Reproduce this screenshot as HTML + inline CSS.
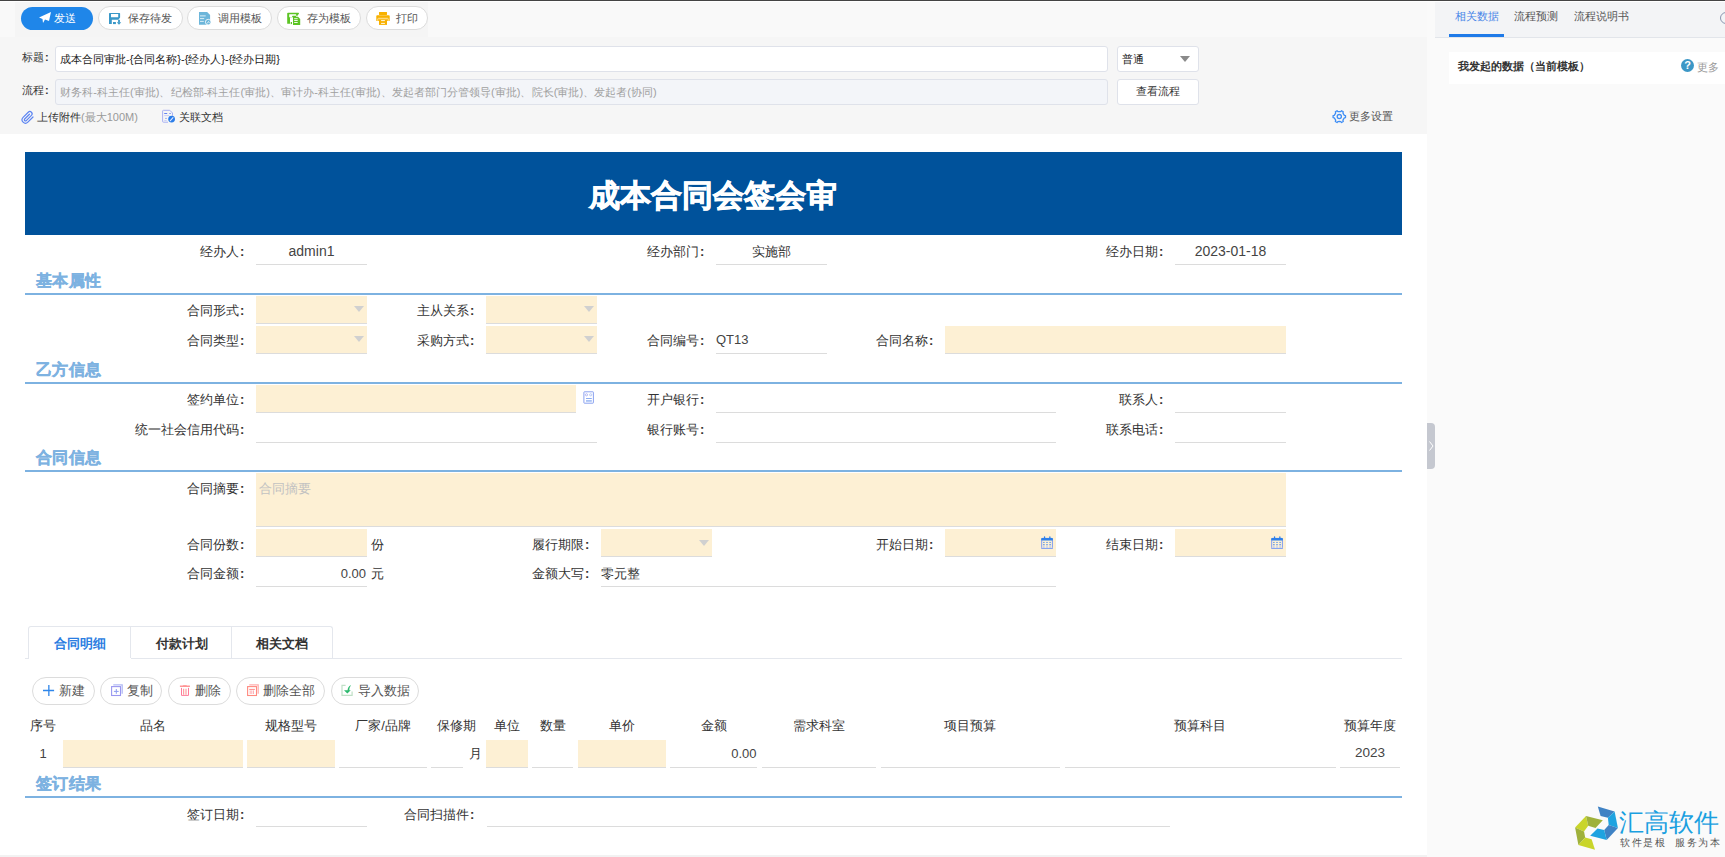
<!DOCTYPE html>
<html><head><meta charset="utf-8">
<style>
*{box-sizing:border-box;margin:0;padding:0}
html,body{width:1725px;height:857px;overflow:hidden;background:#fff;font-family:"Liberation Sans",sans-serif;color:#333}
.a{position:absolute}
.t{position:absolute;white-space:nowrap;font-size:12px;line-height:12px;color:#333}
.s11{font-size:11px;line-height:11px}
.s13{font-size:13px;line-height:13px}
.btn{position:absolute;height:24px;border:1px solid #dcdcdc;border-radius:12px;background:#fff}
.fld{position:absolute;height:28px;background:#fdf0d4;border-bottom:1px solid #dcdcdc}
.und{position:absolute;height:28px;border-bottom:1px solid #dcdcdc}
.sec{position:absolute;left:36px;font-size:16px;line-height:16px;font-weight:bold;letter-spacing:0.4px;color:#7db2e1;-webkit-text-stroke:0.35px #7db2e1;white-space:nowrap}
.secl{position:absolute;left:25px;width:1377px;height:2px;background:#7db2e1}
.lbl{position:absolute;white-space:nowrap;font-size:13px;line-height:13px;color:#333;text-align:right}
.c{display:inline-block;width:6px;text-indent:1px;font-weight:bold;text-align:left}
.tri{position:absolute;width:0;height:0;border-left:5px solid transparent;border-right:5px solid transparent;border-top:6px solid #d0d0d0}
.tbtn{position:absolute;height:28px;border:1px solid #dcdcdc;border-radius:14px;background:#fff}
.th{position:absolute;top:719px;font-size:13px;line-height:13px;white-space:nowrap;color:#333;text-align:center}
</style></head><body>
<!-- top dark line -->
<div class="a" style="left:0;top:0;width:1725px;height:1px;background:#444"></div>
<!-- left main bg -->
<div class="a" style="left:0;top:2px;width:1427px;height:132px;background:#f6f6f6"></div>
<div class="a" style="left:0;top:2px;width:1427px;height:35px;background:#f9f9f9"></div>
<div class="a" style="left:15px;top:2px;width:413px;height:35px;background:#f5f5f5"></div>
<!-- right panel -->
<div class="a" style="left:1427px;top:2px;width:298px;height:855px;background:#fafafa"></div>
<div class="a" style="left:1435px;top:2px;width:290px;height:36px;background:#f3f4f6;border-bottom:1px solid #e2e5ea"></div>
<!-- bottom band -->
<div class="a" style="left:0;top:855px;width:1427px;height:2px;background:#f2f2f2"></div>

<!-- toolbar buttons -->
<div class="a" style="left:21px;top:7px;width:72px;height:23px;border-radius:12px;background:#1f86e9"></div>
<svg class="a" style="left:39px;top:12px" width="12" height="11" viewBox="0 0 12 11"><path d="M0 5.5 L12 0 L10 9 L6 7.5 L4 11 L3.5 7 Z" fill="#fff"/></svg>
<div class="t" style="left:54px;top:12.5px;color:#fff;font-size:11px;line-height:11px">发送</div>

<div class="btn" style="left:98px;top:6px;width:85px"></div>
<svg class="a" style="left:104px;top:8px" width="24" height="20" viewBox="0 0 24 20"><path fill-rule="evenodd" fill="#3a98c8" d="M5 5.6Q5 4.9 5.7 4.9H15.4Q16.1 4.9 16.1 5.6V9.6L14.4 11.7H7.8V16.1H5ZM7 6.1V9.3H14.2V6.1Z"/><rect x="9" y="14" width="2.9" height="2.1" fill="#3a98c8"/><rect x="14.1" y="11.8" width="1.8" height="2.8" fill="#3a98c8"/><path d="M12.8 14.2H17.2L15 16.8Z" fill="#3a98c8"/></svg>
<div class="t" style="left:128px;top:12.5px;color:#555;font-size:11px;line-height:11px">保存待发</div>

<div class="btn" style="left:187px;top:6px;width:85px"></div>
<svg class="a" style="left:194px;top:8px" width="24" height="20" viewBox="0 0 24 20"><path fill="#6db6da" d="M5 3.9H13.1L16.1 7V11.2L13.5 16.8H5Z"/><path d="M6 7.9H11.7M6 10.6H10.2M6 13.4H9.8" stroke="#fff" stroke-width="0.9" opacity="0.85"/><circle cx="14.2" cy="14.1" r="2.8" fill="#6db6da" stroke="#fff" stroke-width="0.8"/><path d="M13 15.5L14.5 13.5L15.6 15.2" stroke="#fff" stroke-width="0.7" fill="none"/></svg>
<div class="t" style="left:218px;top:12.5px;color:#555;font-size:11px;line-height:11px">调用模板</div>

<div class="btn" style="left:277px;top:6px;width:84px"></div>
<svg class="a" style="left:283px;top:8px" width="24" height="20" viewBox="0 0 24 20"><path fill-rule="evenodd" fill="#5cc424" d="M4.2 5.6Q4.2 4.8 5 4.8H15.4Q16.1 4.8 16 5.6L14.5 7.7H9.6L8.6 9.4H7V15.8H4.2ZM6.2 6.3V9.3H13.1V6.3Z"/><rect x="7.7" y="14" width="1.3" height="2.1" fill="#5cc424"/><path fill="#5cc424" d="M10 8.8H15L17.2 11V16.9H10Z"/><path d="M11.2 10.7H14.7M11.2 12.5H14.7M11.2 14.5H14.7" stroke="#fff" stroke-width="0.9"/></svg>
<div class="t" style="left:307px;top:12.5px;color:#555;font-size:11px;line-height:11px">存为模板</div>

<div class="btn" style="left:366px;top:6px;width:62px"></div>
<svg class="a" style="left:372px;top:8px" width="24" height="20" viewBox="0 0 24 20"><rect x="7" y="3.9" width="8" height="3.1" rx="0.4" fill="#f8b100"/><path fill="#f8b100" d="M4.3 8Q4.3 7.2 5.2 7.2H16.8Q17.7 7.2 17.7 8V12.4Q17.7 13.1 17 13.1H15V11.7H7V13.1H5Q4.3 13.1 4.3 12.4Z"/><path d="M5.8 13V10.8Q5.8 10.3 6.5 10.3H15.5Q16.2 10.3 16.2 10.8V13" fill="none" stroke="#fde3a0" stroke-width="1"/><rect x="7" y="11.7" width="8" height="5.2" fill="#f8b100"/><path d="M9.1 12.6H12.9M9.1 15.4H12.9" stroke="#fff" stroke-width="0.9"/></svg>
<div class="t" style="left:396px;top:12.5px;color:#555;font-size:11px;line-height:11px">打印</div>

<!-- header rows -->
<div class="t s11" style="left:22px;top:52px">标题<span class="c">:</span></div>
<div class="a" style="left:55px;top:46px;width:1053px;height:26px;background:#fff;border:1px solid #dfe2ea;border-radius:3px"></div>
<div class="t s11" style="left:60px;top:54px;color:#222">成本合同审批-{合同名称}-{经办人}-{经办日期}</div>
<div class="a" style="left:1117px;top:46px;width:82px;height:26px;background:#fff;border:1px solid #dfe2ea;border-radius:3px"></div>
<div class="t s11" style="left:1122px;top:54px;color:#222">普通</div>
<div class="a" style="left:1180px;top:56px;width:0;height:0;border-left:5px solid transparent;border-right:5px solid transparent;border-top:6px solid #8a8a8a"></div>

<div class="t s11" style="left:22px;top:85px">流程<span class="c">:</span></div>
<div class="a" style="left:55px;top:79px;width:1053px;height:26px;background:#f3f5f9;border:1px solid #dfe2ea;border-radius:3px"></div>
<div class="t s11" style="left:60px;top:87px;color:#a0a0a0;letter-spacing:0.045px">财务科-科主任(审批)、纪检部-科主任(审批)、审计办-科主任(审批)、发起者部门分管领导(审批)、院长(审批)、发起者(协同)</div>
<div class="a" style="left:1117px;top:79px;width:82px;height:26px;background:#fff;border:1px solid #dfe2ea;border-radius:3px"></div>
<div class="t s11" style="left:1136px;top:86px">查看流程</div>

<svg class="a" style="left:18px;top:106px" width="20" height="22" viewBox="0 0 20 22"><g transform="translate(3,4.8) scale(0.56,0.56)"><path d="M21.44 11.05l-9.19 9.19a6 6 0 0 1-8.49-8.49l9.19-9.19a4 4 0 0 1 5.66 5.66l-9.2 9.19a2 2 0 0 1-2.83-2.83l8.49-8.48" fill="none" stroke="#5b84f2" stroke-width="2.1" stroke-linecap="round" stroke-linejoin="round"/></g></svg>
<div class="t s11" style="left:37px;top:112px">上传附件<span style="color:#999">(最大100M)</span></div>
<svg class="a" style="left:158px;top:106px" width="20" height="22" viewBox="0 0 20 22"><path d="M10 16.2H5.4Q4.6 16.2 4.6 15.4V5.1Q4.6 4.3 5.4 4.3H11.8L14.5 7V9.8" fill="none" stroke="#a9b1f3" stroke-width="1"/><rect x="6.2" y="7" width="3" height="1" fill="#6484f0"/><rect x="11.4" y="7" width="1.3" height="1" fill="#6484f0"/><rect x="6.2" y="9.2" width="5" height="0.9" fill="#c3c9f6"/><rect x="7.3" y="11.9" width="1.4" height="1" fill="#8299f0"/><rect x="6.2" y="14" width="2.5" height="0.8" fill="#c3c9f6"/><circle cx="13.6" cy="13.1" r="3.4" fill="#2b7de9"/><path d="M12.3 14.6L15 11.6" stroke="#e3e8ff" stroke-width="1.1" stroke-linecap="round"/></svg>
<div class="t s11" style="left:179px;top:112px">关联文档</div>

<svg class="a" style="left:1329px;top:106px" width="20" height="22" viewBox="0 0 20 22"><path d="M10.30 5.70 L11.73 5.60 L12.56 4.72 L14.26 5.70 L13.91 6.86 L14.54 8.15 L15.35 9.34 L16.52 9.61 L16.52 11.59 L15.35 11.86 L14.54 13.05 L13.91 14.34 L14.26 15.50 L12.56 16.48 L11.73 15.60 L10.30 15.50 L8.87 15.60 L8.04 16.48 L6.34 15.50 L6.69 14.34 L6.06 13.05 L5.25 11.86 L4.08 11.59 L4.08 9.61 L5.25 9.34 L6.06 8.15 L6.69 6.86 L6.34 5.70 L8.04 4.72 L8.87 5.60Z" fill="none" stroke="#3f8ef5" stroke-width="1.3" stroke-linejoin="round"/><circle cx="10.3" cy="10.6" r="2.1" fill="none" stroke="#3f8ef5" stroke-width="1.3"/></svg>
<div class="t s11" style="left:1349px;top:111px;color:#555">更多设置</div>

<!-- right panel content -->
<div class="t s11" style="left:1455px;top:11px;color:#4a86e8">相关数据</div>
<div class="a" style="left:1449px;top:34px;width:55px;height:3px;background:#1f7ae8"></div>
<div class="t s11" style="left:1514px;top:11px;color:#555">流程预测</div>
<div class="t s11" style="left:1574px;top:11px;color:#555">流程说明书</div>
<div class="a" style="left:1720px;top:12px;width:12px;height:12px;border:1px solid #8a96b0;border-radius:50%"></div>
<div class="a" style="left:1449px;top:52px;width:276px;height:32px;background:#fff"></div>
<div class="t s11" style="left:1458px;top:61px;color:#333;font-weight:bold">我发起的数据（当前模板）</div>
<div class="a" style="left:1681px;top:59px;width:13px;height:13px;border-radius:50%;background:#3c97c6;color:#fff;font-size:11px;line-height:13px;text-align:center;font-weight:bold">?</div>
<div class="t s11" style="left:1697px;top:62px;color:#999">更多</div>

<!-- scroll handle -->
<div class="a" style="left:1427px;top:423px;width:8px;height:46px;background:#c5c8d0;border-radius:0 4px 4px 0"></div>
<svg class="a" style="left:1428px;top:440px" width="7" height="12" viewBox="0 0 7 12"><path d="M1.5 1.5 L5 6 L1.5 10.5" fill="none" stroke="#fff" stroke-width="1"/></svg>

<!-- blue header -->
<div class="a" style="left:25px;top:152px;width:1377px;height:83px;background:#00529b"></div>
<div class="t" style="left:589px;top:180px;font-size:31px;line-height:31px;font-weight:bold;color:#fff;-webkit-text-stroke:0.7px #fff">成本合同会签会审</div>

<div class="lbl" style="left:45px;top:244.5px;width:200px">经办人<span class="c">:</span></div>
<div class="und" style="left:256px;top:237px;width:111px;height:28px"></div>
<div class="t" style="left:211.5px;top:243.5px;width:200px;text-align:center;font-size:14px;line-height:14px;color:#444;">admin1</div>
<div class="lbl" style="left:505px;top:244.5px;width:200px">经办部门<span class="c">:</span></div>
<div class="und" style="left:716px;top:237px;width:111px;height:28px"></div>
<div class="t" style="left:671.5px;top:244.5px;width:200px;text-align:center;font-size:13px;line-height:13px;color:#333;">实施部</div>
<div class="lbl" style="left:964px;top:244.5px;width:200px">经办日期<span class="c">:</span></div>
<div class="und" style="left:1175px;top:237px;width:111px;height:28px"></div>
<div class="t" style="left:1130.5px;top:243.5px;width:200px;text-align:center;font-size:14px;line-height:14px;color:#444;">2023-01-18</div>
<div class="sec" style="top:272.5px">基本属性</div>
<div class="secl" style="top:293px"></div>
<div class="lbl" style="left:45px;top:303.5px;width:200px">合同形式<span class="c">:</span></div>
<div class="fld" style="left:256px;top:296px;width:111px;height:28px"></div>
<div class="tri" style="left:354px;top:306px"></div>
<div class="lbl" style="left:275px;top:303.5px;width:200px">主从关系<span class="c">:</span></div>
<div class="fld" style="left:486px;top:296px;width:111px;height:28px"></div>
<div class="tri" style="left:584px;top:306px"></div>
<div class="lbl" style="left:45px;top:333.5px;width:200px">合同类型<span class="c">:</span></div>
<div class="fld" style="left:256px;top:326px;width:111px;height:28px"></div>
<div class="tri" style="left:354px;top:336px"></div>
<div class="lbl" style="left:275px;top:333.5px;width:200px">采购方式<span class="c">:</span></div>
<div class="fld" style="left:486px;top:326px;width:111px;height:28px"></div>
<div class="tri" style="left:584px;top:336px"></div>
<div class="lbl" style="left:505px;top:333.5px;width:200px">合同编号<span class="c">:</span></div>
<div class="und" style="left:716px;top:326px;width:111px;height:28px"></div>
<div class="t" style="left:716px;top:333px;font-family:'Liberation Sans',sans-serif;font-size:13px;line-height:13px;color:#444;">QT13</div>
<div class="lbl" style="left:734px;top:333.5px;width:200px">合同名称<span class="c">:</span></div>
<div class="fld" style="left:945px;top:326px;width:341px;height:28px"></div>
<div class="sec" style="top:361.5px">乙方信息</div>
<div class="secl" style="top:382px"></div>
<div class="lbl" style="left:45px;top:393px;width:200px">签约单位<span class="c">:</span></div>
<div class="fld" style="left:256px;top:385px;width:320px;height:28px"></div>
<svg class="a" style="left:579px;top:388px" width="20" height="20" viewBox="0 0 20 20"><rect x="4.9" y="3.8" width="9.5" height="11.4" rx="0.5" fill="none" stroke="#8aa2f0" stroke-width="1"/><circle cx="7.5" cy="6.8" r="1.1" fill="none" stroke="#a3a8f0" stroke-width="0.8"/><circle cx="11.7" cy="6.8" r="1.1" fill="none" stroke="#a9bff2" stroke-width="0.8"/><path d="M7 10.5H12.8" stroke="#7fa4f0" stroke-width="0.9"/><rect x="7" y="12" width="5.8" height="1.8" fill="#a9c2f5"/></svg>
<div class="lbl" style="left:505px;top:393px;width:200px">开户银行<span class="c">:</span></div>
<div class="und" style="left:716px;top:385px;width:340px;height:28px"></div>
<div class="lbl" style="left:964px;top:393px;width:200px">联系人<span class="c">:</span></div>
<div class="und" style="left:1175px;top:385px;width:111px;height:28px"></div>
<div class="lbl" style="left:45px;top:422.5px;width:200px">统一社会信用代码<span class="c">:</span></div>
<div class="und" style="left:256px;top:415px;width:341px;height:28px"></div>
<div class="lbl" style="left:505px;top:422.5px;width:200px">银行账号<span class="c">:</span></div>
<div class="und" style="left:716px;top:415px;width:340px;height:28px"></div>
<div class="lbl" style="left:964px;top:422.5px;width:200px">联系电话<span class="c">:</span></div>
<div class="und" style="left:1175px;top:415px;width:111px;height:28px"></div>
<div class="sec" style="top:449.5px">合同信息</div>
<div class="secl" style="top:470px"></div>
<div class="lbl" style="left:45px;top:482px;width:200px">合同摘要<span class="c">:</span></div>
<div class="fld" style="left:256px;top:473px;width:1030px;height:54px"></div>
<div class="t" style="left:258.5px;top:482px;color:#c2c2c2;font-size:13px;line-height:13px;">合同摘要</div>
<div class="lbl" style="left:45px;top:538px;width:200px">合同份数<span class="c">:</span></div>
<div class="fld" style="left:256px;top:529px;width:111px;height:28px"></div>
<div class="t" style="left:371px;top:538px;font-size:13px;line-height:13px;">份</div>
<div class="lbl" style="left:390px;top:538px;width:200px">履行期限<span class="c">:</span></div>
<div class="fld" style="left:601px;top:529px;width:111px;height:28px"></div>
<div class="tri" style="left:699px;top:540px"></div>
<div class="lbl" style="left:734px;top:538px;width:200px">开始日期<span class="c">:</span></div>
<div class="fld" style="left:945px;top:529px;width:111px;height:28px"></div>
<svg class="a" style="left:1037px;top:533px" width="20" height="20" viewBox="0 0 20 20"><rect x="4.7" y="5.4" width="10.7" height="10" rx="0.8" fill="none" stroke="#7f9cf0" stroke-width="1"/><rect x="4.2" y="4.9" width="11.7" height="2.6" rx="0.8" fill="#2f80ea"/><rect x="6.9" y="3.3" width="1.3" height="2.5" rx="0.6" fill="#2f80ea"/><rect x="12.2" y="3.3" width="1.3" height="2.5" rx="0.6" fill="#2f80ea"/><path d="M6.2 9.45H7.6M9.3 9.45H10.7M12.4 9.45H13.8M6.2 11.55H7.6M9.3 11.55H10.7M12.4 11.55H13.8" stroke="#3f86ec" stroke-width="0.9"/><path d="M6.9 12V15M10 12V15M13.1 12V15" stroke="#a8c0f2" stroke-width="0.9"/><rect x="4.2" y="15" width="11.7" height="0.9" fill="#86a4f0"/></svg>
<div class="lbl" style="left:964px;top:538px;width:200px">结束日期<span class="c">:</span></div>
<div class="fld" style="left:1175px;top:529px;width:111px;height:28px"></div>
<svg class="a" style="left:1266.5px;top:533px" width="20" height="20" viewBox="0 0 20 20"><rect x="4.7" y="5.4" width="10.7" height="10" rx="0.8" fill="none" stroke="#7f9cf0" stroke-width="1"/><rect x="4.2" y="4.9" width="11.7" height="2.6" rx="0.8" fill="#2f80ea"/><rect x="6.9" y="3.3" width="1.3" height="2.5" rx="0.6" fill="#2f80ea"/><rect x="12.2" y="3.3" width="1.3" height="2.5" rx="0.6" fill="#2f80ea"/><path d="M6.2 9.45H7.6M9.3 9.45H10.7M12.4 9.45H13.8M6.2 11.55H7.6M9.3 11.55H10.7M12.4 11.55H13.8" stroke="#3f86ec" stroke-width="0.9"/><path d="M6.9 12V15M10 12V15M13.1 12V15" stroke="#a8c0f2" stroke-width="0.9"/><rect x="4.2" y="15" width="11.7" height="0.9" fill="#86a4f0"/></svg>
<div class="lbl" style="left:45px;top:567px;width:200px">合同金额<span class="c">:</span></div>
<div class="und" style="left:256px;top:559px;width:111px;height:28px"></div>
<div class="t" style="left:166px;top:566.5px;width:200px;text-align:right;font-family:'Liberation Sans',sans-serif;font-size:13px;line-height:13px;color:#444;">0.00</div>
<div class="t" style="left:371px;top:567px;font-size:13px;line-height:13px;">元</div>
<div class="lbl" style="left:390px;top:567px;width:200px">金额大写<span class="c">:</span></div>
<div class="und" style="left:601px;top:559px;width:455px;height:28px"></div>
<div class="t" style="left:601px;top:567px;font-size:13px;line-height:13px;">零元整</div>
<div class="a" style="left:25px;top:658px;width:1377px;height:1px;background:#e4e7ed"></div>
<div class="a" style="left:28px;top:626px;width:305px;height:33px;border:1px solid #e4e7ed;border-bottom:none;border-radius:3px 3px 0 0;background:#fff"></div>
<div class="a" style="left:130px;top:627px;width:1px;height:31px;background:#e4e7ed"></div>
<div class="a" style="left:231px;top:627px;width:1px;height:31px;background:#e4e7ed"></div>
<div class="a" style="left:131px;top:658px;width:201px;height:1px;background:#e4e7ed"></div>
<div class="t" style="left:-20.5px;top:637px;width:200px;text-align:center;font-size:13px;line-height:13px;font-weight:bold;color:#2a7de1">合同明细</div>
<div class="t" style="left:82.0px;top:637px;width:200px;text-align:center;font-size:13px;line-height:13px;font-weight:bold;color:#333">付款计划</div>
<div class="t" style="left:182.0px;top:637px;width:200px;text-align:center;font-size:13px;line-height:13px;font-weight:bold;color:#333">相关文档</div>
<div class="tbtn" style="left:32px;top:677px;width:63px"></div>
<svg class="a" style="left:38px;top:680px" width="20" height="20" viewBox="0 0 20 20"><path d="M5 10.5H16.1M10.85 5V15.9" stroke="#2f86ea" stroke-width="1.3"/></svg>
<div class="t" style="left:58.5px;top:684px;font-size:13px;line-height:13px;color:#555">新建</div>
<div class="tbtn" style="left:100px;top:677px;width:62px"></div>
<svg class="a" style="left:106px;top:680px" width="20" height="20" viewBox="0 0 20 20"><path d="M7.3 4.9H16.2V13.8" fill="none" stroke="#b3bbf5" stroke-width="1.3"/><rect x="5.6" y="6.6" width="8.9" height="8.9" fill="#fff" stroke="#9a97f0" stroke-width="1.1"/><path d="M10.3 9V13.8M7.9 11.4H12.7" stroke="#8b9bf0" stroke-width="1"/></svg>
<div class="t" style="left:126.5px;top:684px;font-size:13px;line-height:13px;color:#555">复制</div>
<div class="tbtn" style="left:168px;top:677px;width:63px"></div>
<svg class="a" style="left:175px;top:680px" width="20" height="20" viewBox="0 0 20 20"><path d="M4.9 6.2H14.9" stroke="#ff7b7b" stroke-width="1.2"/><path d="M7.7 5.5Q7.7 4.9 8.3 4.9H11.3Q11.9 4.9 11.9 5.5" fill="#ff7b7b"/><path d="M6.5 7.9V15.4H13.5V7.9" fill="none" stroke="#ff7b9b" stroke-width="1"/><path d="M8.6 8.8V14.8M11 8.8V14.8" stroke="#ffa0a0" stroke-width="1.2"/></svg>
<div class="t" style="left:194.5px;top:684px;font-size:13px;line-height:13px;color:#555">删除</div>
<div class="tbtn" style="left:236px;top:677px;width:89px"></div>
<svg class="a" style="left:242px;top:680px" width="20" height="20" viewBox="0 0 20 20"><path d="M7.3 4.9H16.2V13.8" fill="none" stroke="#ffb0b0" stroke-width="1.3"/><rect x="5.6" y="6.6" width="8.9" height="8.9" fill="#fff" stroke="#ff8a80" stroke-width="1.1"/><path d="M7.2 9.4H12.9" stroke="#ff8a8a" stroke-width="1"/><path d="M8.2 10.4V14M9.8 10.4V14M11.5 10.4V14" stroke="#ff9aa0" stroke-width="0.8"/></svg>
<div class="t" style="left:263px;top:684px;font-size:13px;line-height:13px;color:#555">删除全部</div>
<div class="tbtn" style="left:331px;top:677px;width:88px"></div>
<svg class="a" style="left:337px;top:680px" width="20" height="20" viewBox="0 0 20 20"><path d="M8.6 5.4H5V15.4H15.1V11.4" fill="none" stroke="#bfe0c6" stroke-width="1.2"/><path d="M14 4.9Q10.6 6.5 10.6 10.3H7L10.3 13.6L13.8 10.3H12.3Q12.3 7.4 14 4.9Z" fill="#2dba6e"/></svg>
<div class="t" style="left:357.5px;top:684px;font-size:13px;line-height:13px;color:#555">导入数据</div>
<div class="t" style="left:-57.0px;top:718.5px;width:200px;text-align:center;font-size:13px;line-height:13px;">序号</div>
<div class="t" style="left:53.0px;top:718.5px;width:200px;text-align:center;font-size:13px;line-height:13px;">品名</div>
<div class="t" style="left:191.0px;top:718.5px;width:200px;text-align:center;font-size:13px;line-height:13px;">规格型号</div>
<div class="t" style="left:283.0px;top:718.5px;width:200px;text-align:center;font-size:13px;line-height:13px;">厂家/品牌</div>
<div class="t" style="left:356.5px;top:718.5px;width:200px;text-align:center;font-size:13px;line-height:13px;">保修期</div>
<div class="t" style="left:407.0px;top:718.5px;width:200px;text-align:center;font-size:13px;line-height:13px;">单位</div>
<div class="t" style="left:452.5px;top:718.5px;width:200px;text-align:center;font-size:13px;line-height:13px;">数量</div>
<div class="t" style="left:521.5px;top:718.5px;width:200px;text-align:center;font-size:13px;line-height:13px;">单价</div>
<div class="t" style="left:613.5px;top:718.5px;width:200px;text-align:center;font-size:13px;line-height:13px;">金额</div>
<div class="t" style="left:718.5px;top:718.5px;width:200px;text-align:center;font-size:13px;line-height:13px;">需求科室</div>
<div class="t" style="left:870.0px;top:718.5px;width:200px;text-align:center;font-size:13px;line-height:13px;">项目预算</div>
<div class="t" style="left:1100.0px;top:718.5px;width:200px;text-align:center;font-size:13px;line-height:13px;">预算科目</div>
<div class="t" style="left:1270.0px;top:718.5px;width:200px;text-align:center;font-size:13px;line-height:13px;">预算年度</div>
<div class="t" style="left:28.0px;top:746.5px;width:30px;text-align:center;font-family:'Liberation Sans',sans-serif;font-size:13px;line-height:13px;color:#444;">1</div>
<div class="fld" style="left:63px;top:740px;width:180px;height:28px"></div>
<div class="fld" style="left:247px;top:740px;width:88px;height:28px"></div>
<div class="und" style="left:339px;top:740px;width:88px;height:28px"></div>
<div class="und" style="left:431px;top:740px;width:32px;height:28px"></div>
<div class="t" style="left:468.5px;top:747px;font-size:13px;line-height:13px">月</div>
<div class="fld" style="left:486px;top:740px;width:42px;height:28px"></div>
<div class="und" style="left:532px;top:740px;width:41px;height:28px"></div>
<div class="fld" style="left:578px;top:740px;width:88px;height:28px"></div>
<div class="und" style="left:670px;top:740px;width:87px;height:28px"></div>
<div class="t" style="left:556.5px;top:746.5px;width:200px;text-align:right;font-family:'Liberation Sans',sans-serif;font-size:13px;line-height:13px;color:#444;">0.00</div>
<div class="und" style="left:762px;top:740px;width:114px;height:28px"></div>
<div class="und" style="left:881px;top:740px;width:179px;height:28px"></div>
<div class="und" style="left:1065px;top:740px;width:271px;height:28px"></div>
<div class="und" style="left:1340px;top:740px;width:60px;height:28px"></div>
<div class="t" style="left:1340.0px;top:746px;width:60px;text-align:center;font-size:13.5px;line-height:13.5px;color:#444;">2023</div>
<div class="sec" style="top:775.5px">签订结果</div>
<div class="secl" style="top:796px"></div>
<div class="lbl" style="left:45px;top:808px;width:200px">签订日期<span class="c">:</span></div>
<div class="und" style="left:256px;top:799px;width:111px;height:28px"></div>
<div class="lbl" style="left:275px;top:808px;width:200px">合同扫描件<span class="c">:</span></div>
<div class="und" style="left:487px;top:799px;width:683px;height:28px"></div>
<svg class="a" style="left:1572px;top:804px" width="48" height="48" viewBox="0 0 48 48">
<polygon points="3.1,23.5 14,12 16.2,21.8 12,27.5" fill="#c9d52a"/>
<polygon points="14,12 30.8,16.2 23.5,24.1 16.2,21.8" fill="#9fb13b"/>
<polygon points="3.1,23.5 12,27.5 13.2,33.6 6.4,40.9" fill="#9fb13b"/>
<polygon points="6.4,40.9 13.2,33.6 19.6,35.3 23,45.7" fill="#c9d52a"/>
<polygon points="25.8,2.5 42.6,7.6 35.9,13.7 28.6,12" fill="#3f82c4"/>
<polygon points="42.6,7.6 45.9,24.1 36.7,21 35.9,13.7" fill="#1fa3e0"/>
<polygon points="45.9,24.1 34.7,36.1 32.2,26 36.7,21" fill="#3f82c4"/>
<polygon points="18.2,31.7 25.5,24.6 32.2,26 34.7,36.1" fill="#1fa3e0"/>
</svg>
<div class="t" style="left:1619px;top:810px;font-size:25px;line-height:25px;color:#1aa0e0;font-weight:300">汇高软件</div>
<div class="t" style="left:1620px;top:838px;font-size:10px;line-height:10px;color:#555;letter-spacing:1.5px">软件是根</div>
<div class="t" style="left:1675px;top:838px;font-size:10px;line-height:10px;color:#555;letter-spacing:1.5px">服务为本</div>
</body></html>
